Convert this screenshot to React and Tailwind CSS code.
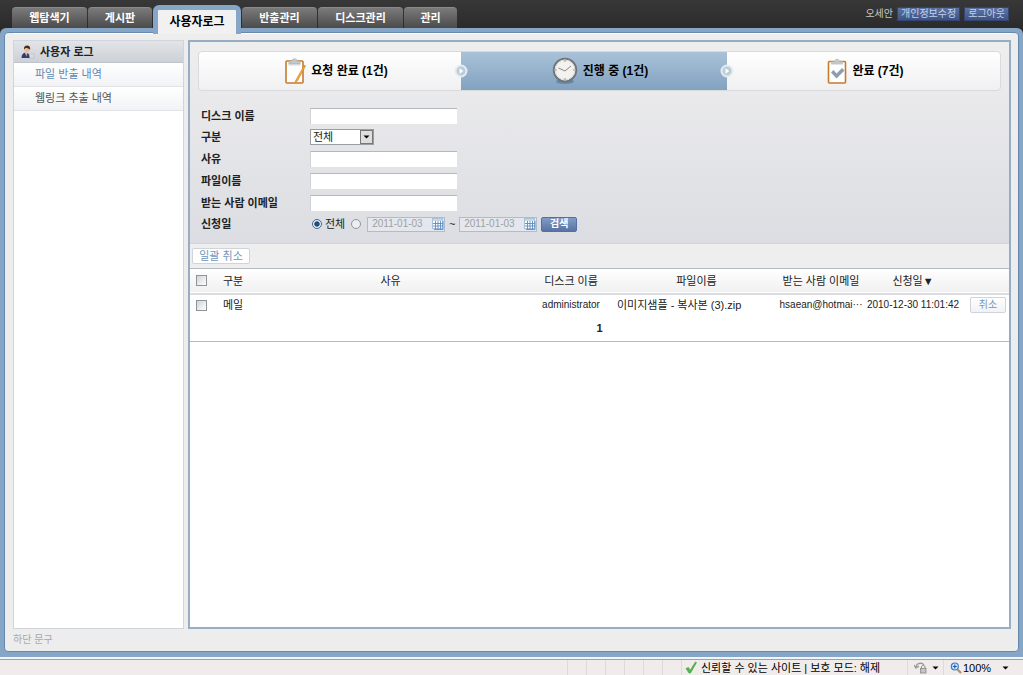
import React from 'react';

const tabs = [
  { label: '웹탐색기', width: 'w-[75px]' },
  { label: '게시판', width: 'w-16' },
  { label: '사용자로그', active: true },
  { label: '반출관리', width: 'w-[75px]' },
  { label: '디스크관리', width: 'w-[85px]' },
  { label: '관리', width: 'w-[53px]' },
];

const textFields = [
  { id: 'reason', label: '사유' },
  { id: 'filename', label: '파일이름' },
  { id: 'email', label: '받는 사람 이메일' },
];

const rows = [
  {
    type: '메일',
    reason: '',
    disk: 'administrator',
    file: '이미지샘플 - 복사본 (3).zip',
    email: 'hsaean@hotmai···',
    date: '2010-12-30 11:01:42',
  },
];

const UserIcon = () => (
  <svg width="14" height="14" viewBox="0 0 14 14" aria-hidden="true">
    <path d="M8 9h5v4H7z" fill="#d9dde2" stroke="#b5bac2" strokeWidth="0.6" />
    <path d="M0.5 13c0-3.500 1.500-5 4-5.500 2.500 0 4 1.500 4 5.500z" fill="#2d3f70" />
    <path d="M4 7.500l1.500 4 1-4z" fill="#fff" />
    <path d="M5.200 8.500l.8 3.500.6-3.500z" fill="#c0392b" />
    <circle cx="6" cy="4.500" r="2.700" fill="#eebc93" />
    <path d="M3 4.500C2.500 1.500 4.500.3 6.500.5 9 .8 9.500 2.500 9 4.800 8.500 3.500 6 3 4.500 3z" fill="#4a2d1c" />
  </svg>
);

const ClipboardPencilIcon = () => (
  <svg width="22" height="28" viewBox="0 0 22 28" aria-hidden="true">
    <rect x="2" y="4" width="17" height="22" rx="1" fill="#fff" stroke="#c67a2e" strokeWidth="1.6" />
    <path d="M4 6h13v3H4z" fill="#e9edf0" />
    <path d="M5 7V4h3c0-3 5-3 5 0h3v3z" fill="#c3c7ca" stroke="#a5aaae" strokeWidth="0.6" />
    <path d="M20.500 8l-8.500 15-1.500 3 2.800-2L21.500 9z" fill="#f3b13d" stroke="#d8892a" strokeWidth="0.8" />
  </svg>
);

const ClockIcon = () => (
  <svg width="26" height="28" viewBox="0 0 26 28" aria-hidden="true">
    <ellipse cx="13" cy="24.500" rx="9" ry="2.500" fill="#5c7894" opacity="0.7" />
    <circle cx="13" cy="13" r="11.300" fill="#f3f2ef" stroke="#6e7479" strokeWidth="1.800" />
    <circle cx="13" cy="13" r="9.800" fill="none" stroke="#d6d6d4" strokeWidth="0.8" />
    <path d="M13 3v2M13 21v2M3 13h2M21 13h2" stroke="#999" />
    <path d="M6.500 11l6.500 3 6-5" fill="none" stroke="#888" strokeWidth="1" />
  </svg>
);

const ClipboardCheckIcon = () => (
  <svg width="20" height="28" viewBox="0 0 20 28" aria-hidden="true">
    <rect x="1.500" y="4.500" width="17" height="21.500" rx="1" fill="#fff" stroke="#c67a2e" strokeWidth="1.600" />
    <path d="M4 7.500V4.500h3.500C7 .8 13 .8 12.500 4.500H16v3z" fill="#c3c7ca" />
    <path d="M4 15.500l2.500-2.500 3 3.500 5.500-5.500 2.500 2.500-8 8z" fill="#8b9eb3" />
  </svg>
);

const StepArrow = () => (
  <svg
    className="absolute top-1/2 right-0 z-10 -translate-y-1/2 translate-x-1/2"
    width="14"
    height="14"
    viewBox="0 0 14 14"
    aria-hidden="true"
  >
    <circle cx="7" cy="7" r="5.500" fill="#bccdd8" stroke="#e4edf3" strokeWidth="2" />
    <path d="M5.500 4.300L9.300 7 5.500 9.700z" fill="#fff" />
  </svg>
);

const CalendarIcon = () => (
  <svg width="12" height="12" viewBox="0 0 12 12" aria-hidden="true">
    <rect x="0.500" y="0.500" width="10" height="10" fill="#fff" stroke="#a9c2dc" />
    <path d="M1 1h9v2H1z" fill="#c5d8ea" />
    <path d="M1 5.500h10M1 8h10M3.500 3v8M6 3v8M8.500 3v8M11 3v8.500H2" fill="none" stroke="#5f8bbd" strokeWidth="0.900" />
  </svg>
);

const CheckIcon = () => (
  <svg width="12" height="13" viewBox="0 0 12 13" aria-hidden="true">
    <path d="M1 7.500l2.500-1 1.500 3L10.500 1l1 .5L5.500 12h-1.500z" fill="#52b94a" stroke="#3b9b38" strokeWidth="0.600" />
  </svg>
);

const LockIcon = () => (
  <svg width="14" height="13" viewBox="0 0 14 13" aria-hidden="true">
    <path d="M2 6c.5-4 6-5 8-2M0 4l2 3 3-2" fill="none" stroke="#999" strokeWidth="1.300" />
    <path d="M7.500 7.500V6c0-2 3.500-2 3.500 0v1.500" fill="none" stroke="#888" />
    <rect x="6.500" y="7.500" width="5.500" height="4.500" fill="#c4c4c4" stroke="#888" strokeWidth="0.800" />
  </svg>
);

const ZoomIcon = () => (
  <svg width="12" height="12" viewBox="0 0 12 12" aria-hidden="true">
    <path d="M7.500 7.500l3.500 3.500" stroke="#b98a52" strokeWidth="2" />
    <circle cx="4.800" cy="4.500" r="3.500" fill="#d5eafb" stroke="#3b7cc4" strokeWidth="1.200" />
    <path d="M2.800 4.500h4M4.800 2.500v4" stroke="#1d5fb0" strokeWidth="1.200" />
  </svg>
);

const CaretDown = () => (
  <svg width="7" height="4" viewBox="0 0 7 4" aria-hidden="true">
    <path d="M0.500 0.500h6L3.500 3.500z" fill="#000" />
  </svg>
);

const inputClass =
  'h-4 w-[147px] border-t border-l border-t-[#b4b7bb] border-l-[#d0d2d6] bg-white px-1 text-[11px] leading-3 outline-none';
const checkboxClass =
  'block size-[11px] appearance-none border border-[#8f9499] bg-gradient-to-br from-[#d2d4d6] to-white checked:bg-[#4a7db0] checked:bg-none';
const radioClass =
  'size-[10px] appearance-none rounded-full border border-[#8b97a3] bg-[#eceef0] checked:border-[#48698a] checked:bg-[radial-gradient(circle,#1f4e7c_40%,#e8eff5_55%)]';

const DateInput = ({ label }) => (
  <div className="flex h-[15px] w-[78px] items-center border border-[#a8bed6] bg-[#e4e8ee] pl-1">
    <input
      aria-label={label}
      defaultValue="2011-01-03"
      className="w-0 flex-1 bg-transparent text-[10px] leading-3 text-[#a0a0a0] outline-none"
    />
    <button type="button" aria-label="달력">
      <CalendarIcon />
    </button>
  </div>
);

const Header = () => (
  <header className="flex h-7 items-start justify-between bg-gradient-to-b from-[#383838] to-[#2b2b2b] pr-[14px] pl-3">
    <nav className="flex items-start gap-px pt-[5px]">
      {tabs.map((tab) =>
        tab.active ? (
          <a
            key={tab.label}
            href="#"
            aria-current="page"
            className="relative z-10 flex h-[29px] w-[88px] items-center justify-center rounded-t-md border-x-[5px] border-t-[5px] border-[#86a6c8] bg-[#f1f1f1] text-xs leading-4 font-bold text-black"
          >
            {tab.label}
          </a>
        ) : (
          <a
            key={tab.label}
            href="#"
            className={`mt-[2px] flex h-[21px] items-center justify-center rounded-t-sm border-t border-[#8a8a8a] bg-gradient-to-b from-[#7b7b7b] to-[#4b4b4b] text-[11px] leading-4 font-bold text-white ${tab.width}`}
          >
            {tab.label}
          </a>
        )
      )}
    </nav>
    <div className="flex items-center gap-1 pt-[7px] text-[10px] leading-3 text-[#c8c8c8]">
      <span>오세안</span>
      <a href="#" className="border border-[#33466f] bg-gradient-to-b from-[#5b73a4] to-[#3f5483] px-[3px] text-[#c3d0ea]">
        개인정보수정
      </a>
      <a href="#" className="border border-[#33466f] bg-gradient-to-b from-[#5b73a4] to-[#3f5483] px-[3px] text-[#c3d0ea]">
        로그아웃
      </a>
    </div>
  </header>
);

const Sidebar = () => (
  <aside className="w-[171px] shrink-0 border border-[#cfd5da] bg-white">
    <h2 className="flex h-[22px] items-center gap-[5px] border-b border-[#bcc4cc] bg-gradient-to-b from-[#e2e4e7] to-[#cdd0d6] pl-[7px] text-[11px] leading-4 font-bold">
      <UserIcon />
      사용자 로그
    </h2>
    <ul className="text-[11px] leading-4">
      <li className="border-b border-[#e0e4ea] bg-gradient-to-b from-white to-[#f2f3f5]">
        <a href="#" className="block py-[3px] pb-1 pl-[21px] text-[#6189b3]">
          파일 반출 내역
        </a>
      </li>
      <li className="border-b border-[#e0e4ea] bg-gradient-to-b from-white to-[#f2f3f5]">
        <a href="#" className="block py-[3px] pb-1 pl-[21px] text-[#555]">
          웹링크 추출 내역
        </a>
      </li>
    </ul>
  </aside>
);

const Steps = () => (
  <ol className="grid h-10 grid-cols-[262fr_266fr_273fr] rounded border border-[#d8dadc] bg-gradient-to-b from-white to-[#f0f0f1] text-xs leading-4 font-bold text-black">
    <li className="relative flex items-center justify-center gap-[5px] pl-3">
      <ClipboardPencilIcon />
      요청 완료 (1건)
      <StepArrow />
    </li>
    <li className="relative flex items-center justify-center gap-[5px] bg-gradient-to-b from-[#a9c2d9] to-[#82a2c0] pl-3">
      <ClockIcon />
      진행 중 (1건)
      <StepArrow />
    </li>
    <li className="flex items-center justify-center gap-[5px] pl-1">
      <ClipboardCheckIcon />
      완료 (7건)
    </li>
  </ol>
);

const SearchForm = () => (
  <form
    className="mt-4 grid grid-cols-[109px_1fr] items-center gap-y-[5px] pl-[3px] text-[11px] leading-4"
    onSubmit={(e) => e.preventDefault()}
  >
    <label htmlFor="disk" className="font-bold">디스크 이름</label>
    <div className="flex h-[17px] items-center">
      <input id="disk" type="text" className={inputClass} />
    </div>
    <label htmlFor="type" className="font-bold">구분</label>
    <div className="relative flex h-4 w-16 items-center">
      <select
        id="type"
        className="h-4 w-full appearance-none border border-[#9a9da1] bg-white pl-[2px] text-[11px] leading-3 outline-none"
      >
        <option>전체</option>
      </select>
      <span className="pointer-events-none absolute top-px right-px flex h-[14px] w-[13px] items-center justify-center border border-[#777] bg-[#dedede]">
        <CaretDown />
      </span>
    </div>
    {textFields.map((field) => (
      <React.Fragment key={field.id}>
        <label htmlFor={field.id} className="font-bold">{field.label}</label>
        <div className="flex h-[17px] items-center">
          <input id={field.id} type="text" className={inputClass} />
        </div>
      </React.Fragment>
    ))}
    <span className="font-bold">신청일</span>
    <div className="flex h-4 items-center pl-[2px]">
      <label className="flex items-center gap-[3px]">
        <input type="radio" name="period" defaultChecked className={radioClass} />
        전체
      </label>
      <input type="radio" name="period" aria-label="기간" className={`ml-[6px] mr-[6px] ${radioClass}`} />
      <DateInput label="시작일" />
      <span className="w-[14px] text-center">~</span>
      <DateInput label="종료일" />
      <button
        type="submit"
        className="ml-1 h-[15px] w-9 rounded-xs border border-[#5570a0] bg-gradient-to-b from-[#839cc6] to-[#5872a4] text-[10px] leading-3 font-bold text-white"
      >
        검색
      </button>
    </div>
  </form>
);

const LogTable = () => (
  <table className="w-full table-fixed border-y border-[#b5bac2] text-center text-[11px] leading-4">
    <colgroup>
      <col className="w-[23px]" />
      <col className="w-10" />
      <col />
      <col className="w-[86px]" />
      <col className="w-[165px]" />
      <col className="w-[84px]" />
      <col className="w-[100px]" />
      <col className="w-[46px]" />
    </colgroup>
    <thead>
      <tr className="h-[25px] border-b-2 border-[#dcdde0] bg-gradient-to-b from-white to-[#f0f0f0]">
        <th className="pl-[6px]">
          <input type="checkbox" aria-label="전체 선택" className={checkboxClass} />
        </th>
        <th className="font-normal">구분</th>
        <th className="font-normal">사유</th>
        <th className="font-normal">디스크 이름</th>
        <th className="font-normal">파일이름</th>
        <th className="font-normal whitespace-nowrap">받는 사람 이메일</th>
        <th className="font-normal">신청일▼</th>
        <th />
      </tr>
    </thead>
    <tbody>
      {rows.map((row) => (
        <tr key={row.date} className="h-[22px]">
          <td className="pl-[6px]">
            <input type="checkbox" aria-label="선택" className={checkboxClass} />
          </td>
          <td>{row.type}</td>
          <td>{row.reason}</td>
          <td className="text-[10px]">{row.disk}</td>
          <td className="pl-[3px] text-left whitespace-nowrap">{row.file}</td>
          <td className="text-[10px] whitespace-nowrap">{row.email}</td>
          <td className="text-[10px] whitespace-nowrap">{row.date}</td>
          <td className="pr-[3px]">
            <button
              type="button"
              className="ml-auto block h-4 w-9 rounded-xs border border-[#cfd3da] bg-gradient-to-b from-white to-[#f1f2f4] text-[10px] leading-3 text-[#6f94bd]"
            >
              취소
            </button>
          </td>
        </tr>
      ))}
    </tbody>
    <tfoot>
      <tr>
        <td colSpan={8} className="pt-1 pb-[5px] font-bold">1</td>
      </tr>
    </tfoot>
  </table>
);

const StatusBar = () => (
  <footer className="flex h-4 items-stretch justify-end border-t border-[#8ea3bc] bg-[#f1ecec] text-[11px] leading-4 text-black">
    {[0, 1, 2, 3, 4, 5].map((i) => (
      <span key={i} className="w-[19px] border-l border-[#dfdada]" />
    ))}
    <span className="flex w-[226px] items-center gap-1 border-l border-[#dfdada] pl-[3px] whitespace-nowrap">
      <CheckIcon />
      신뢰할 수 있는 사이트 | 보호 모드: 해제
    </span>
    <span className="flex w-9 items-center gap-1 border-l border-[#dfdada] pl-[6px]">
      <LockIcon />
      <CaretDown />
    </span>
    <span className="flex w-20 items-center gap-px border-l border-[#dfdada] pl-[6px]">
      <ZoomIcon />
      100%
      <span className="ml-auto pr-[14px]">
        <CaretDown />
      </span>
    </span>
  </footer>
);

const App = () => {
  return (
    <div className="flex min-h-screen flex-col bg-[#2b2b2b] font-['Liberation_Sans','Noto_Sans_CJK_KR',sans-serif] text-[#222]">
      <Header />
      <div className="flex flex-1 flex-col rounded-t-md border-b-2 border-b-[#f3f5f8] bg-[#86a6c8] px-1 pt-1 pb-[5px]">
        <div className="flex flex-1 flex-col rounded-sm border border-[#6688aa] bg-[#ededed] pr-[7px] pl-2">
          <div className="flex flex-1 gap-1 border-t border-white pt-[6px]">
            <Sidebar />
            <main className="flex flex-1 flex-col border-2 border-[#96adc2] bg-white">
              <section className="border-b border-[#d2d6dc] bg-gradient-to-b from-[#eeeeef] to-[#dcdde2] px-2 pt-[9px] pb-[11px]">
                <Steps />
                <SearchForm />
              </section>
              <div className="bg-[#eeeeef] px-[2px] py-1">
                <button
                  type="button"
                  className="block h-4 w-[58px] rounded-xs border border-[#cfd3da] bg-white text-[11px] leading-3 text-[#6f94bd]"
                >
                  일괄 취소
                </button>
              </div>
              <LogTable />
            </main>
          </div>
          <p className="py-1 text-[10px] leading-[14px] text-[#a8a8a8]">하단 문구</p>
        </div>
      </div>
      <StatusBar />
    </div>
  );
};

export default App;
